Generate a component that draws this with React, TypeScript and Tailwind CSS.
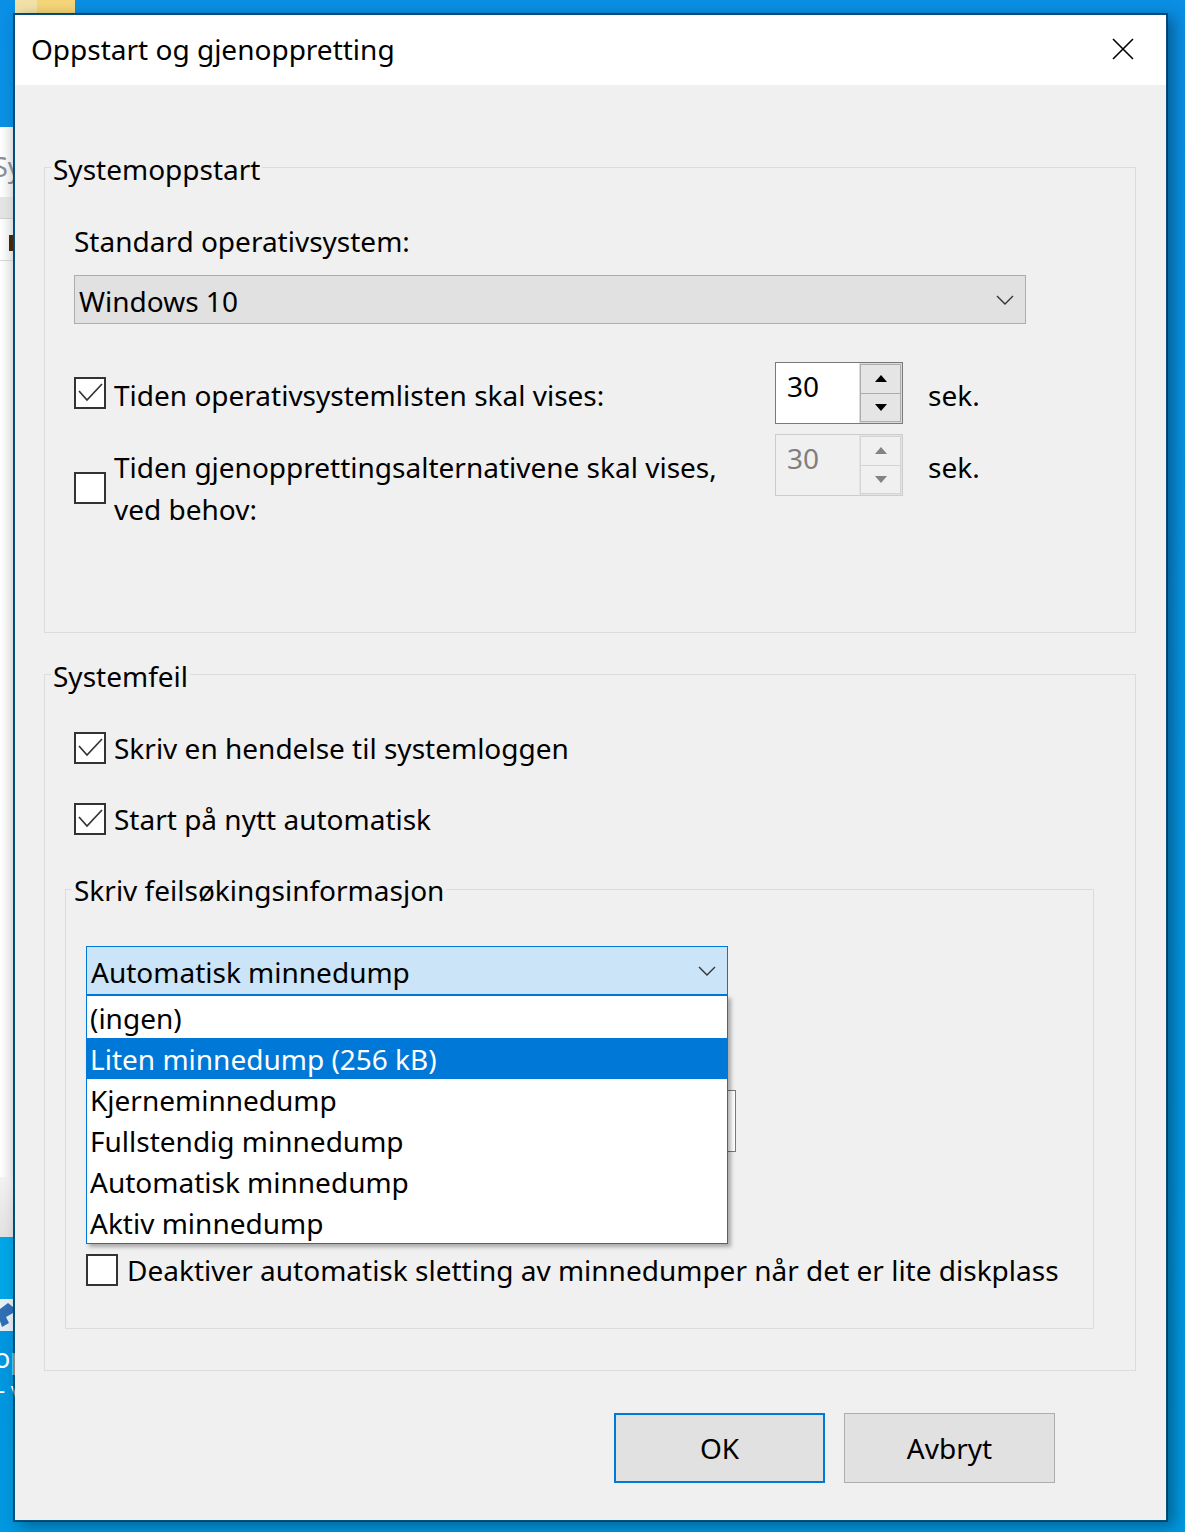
import React from "react";

function CheckBox({ checked }: { checked?: boolean }) {
  return (
    <div className="w-[32px] h-[32px] shrink-0 border-2 border-[#333333] bg-white flex items-center justify-center">
      {checked && (
        <svg width="28" height="28" viewBox="0 0 28 28">
          <polyline points="3,12 11,21 26,5" fill="none" stroke="#333333" strokeWidth="1.7" />
        </svg>
      )}
    </div>
  );
}

function Chevron() {
  return (
    <svg width="18" height="10" viewBox="0 0 18 10">
      <polyline points="1,1 9,9 17,1" fill="none" stroke="#333333" strokeWidth="1.4" />
    </svg>
  );
}

function Tri({ up, color }: { up?: boolean; color: string }) {
  return (
    <svg width="12" height="7" viewBox="0 0 12 7">
      {up ? <polygon points="0,7 12,7 6,0" fill={color} /> : <polygon points="0,0 12,0 6,7" fill={color} />}
    </svg>
  );
}

function Spinner({ disabled }: { disabled?: boolean }) {
  return (
    <div
      className={`flex w-[128px] h-[62px] shrink-0 border ${
        disabled ? "border-[#cccccc] bg-[#f0f0f0]" : "border-[#7a7a7a] bg-white"
      }`}
    >
      <div
        className={`flex-1 pl-[11px] pt-[5px] text-[28px] leading-[36px] ${
          disabled ? "text-[#7f7f7f]" : "text-black"
        }`}
      >
        30
      </div>
      <div className={`w-[43px] flex flex-col border ${disabled ? "border-[#e3e3e3]" : "border-[#dadada]"}`}>
        <div
          className={`flex-1 flex items-center justify-center border ${
            disabled ? "border-[#d4d4d4] bg-[#f0f0f0]" : "border-[#adadad] bg-[#e5e5e5]"
          }`}
        >
          <Tri up color={disabled ? "#838383" : "#000000"} />
        </div>
        <div
          className={`flex-1 flex items-center justify-center border border-t-0 ${
            disabled ? "border-[#d4d4d4] bg-[#f0f0f0]" : "border-[#adadad] bg-[#e5e5e5]"
          }`}
        >
          <Tri color={disabled ? "#838383" : "#000000"} />
        </div>
      </div>
    </div>
  );
}

const items = [
  "(ingen)",
  "Liten minnedump (256 kB)",
  "Kjerneminnedump",
  "Fullstendig minnedump",
  "Automatisk minnedump",
  "Aktiv minnedump",
];

export default function App() {
  return (
    <div className="relative w-[1185px] h-[1532px] overflow-hidden bg-gradient-to-b from-[#0a8fe4] to-[#0098e0] font-['Noto_Sans','Open_Sans',sans-serif] text-black">
      {/* desktop fragments */}
      <div className="absolute left-[15px] top-0 w-[60px] h-[13px] flex">
        <div className="w-[22px] h-full bg-[#f3e2a8]" />
        <div className="flex-1 h-full bg-[#f6d679]" />
      </div>
      <div className="absolute left-0 top-[127px] w-[13px] h-[1110px] overflow-hidden bg-gradient-to-r from-[#ffffff] to-[#ececec]">
        <div className="absolute left-[-7px] top-[22px] text-[27px] leading-[36px] text-[#8a8f99]">Sy</div>
        <div className="absolute left-0 top-[70px] w-full h-[22px] bg-[#e4e4e4] border-b border-[#d0d0d0]" />
        <div className="absolute left-[9px] top-[108px] w-[4px] h-[16px] bg-[#4a2a08]" />
        <div className="absolute left-0 top-[133px] w-full h-px bg-[#d5d5d5]" />
        <div className="absolute left-0 bottom-0 w-full h-[60px] bg-gradient-to-b from-[#f2f2f2] to-[#e2e2e2]" />
      </div>
      <div className="absolute left-0 top-[1237px] w-[13px] h-[62px] bg-[#00a6e6]" />
      <div className="absolute left-0 top-[1299px] w-[13px] h-[32px] bg-[#e8eef6] flex items-center">
        <svg width="13" height="32" viewBox="0 0 13 32">
          <path d="M0 10 L8 4 L13 8 L13 14 L6 18 L9 24 L2 28 L0 22 Z" fill="#2f6fb5" />
        </svg>
      </div>
      <div className="absolute left-[-6px] top-[1340px] text-[27px] leading-[36px] text-white">op</div>
      <div className="absolute left-[-2px] top-[1374px] text-[22px] leading-[30px] text-white">- v</div>

      {/* dialog */}
      <div className="absolute left-[13px] top-[13px] w-[1155px] h-[1509px] border-2 border-black/45 bg-clip-padding bg-[#f0f0f0] shadow-[6px_4px_14px_rgba(0,0,0,0.35)] flex flex-col">
        {/* title bar */}
        <div className="h-[70px] shrink-0 bg-white flex items-center justify-between pl-[16px] pr-[32px]">
          <div className="text-[28px] leading-[36px] -mt-[2px]">Oppstart og gjenoppretting</div>
          <svg width="22" height="22" viewBox="0 0 22 22" className="-mt-[3px]">
            <path d="M1 1 L21 21 M21 1 L1 21" stroke="#000000" strokeWidth="1.6" />
          </svg>
        </div>

        {/* body */}
        <div className="flex-1 pl-[29px] text-[28px] leading-[36px]">
          {/* Group 1 */}
          <div className="mt-[82px] w-[1092px] h-[466px] border border-[#dcdcdc] flex flex-col">
            <div className="-mt-[17px] ml-[6px] px-[2px] w-fit bg-[#f0f0f0]">Systemoppstart</div>
            <div className="pl-[29px] flex flex-col">
              <div className="mt-[36px]">Standard operativsystem:</div>
              <div className="mt-[16px] w-[952px] h-[49px] border border-[#adadad] bg-[#e1e1e1] flex items-center justify-between pl-[4px] pr-[11px]">
                <span className="mt-[2px]">Windows 10</span>
                <Chevron />
              </div>
              <div className="mt-[38px] h-[62px] flex items-center">
                <div className="w-[701px] flex items-center gap-[8px]">
                  <CheckBox checked />
                  <span className="mt-[3px]">Tiden operativsystemlisten skal vises:</span>
                </div>
                <Spinner />
                <span className="ml-[25px] mt-[3px]">sek.</span>
              </div>
              <div className="mt-[10px] flex items-start">
                <div className="w-[701px] mt-[12px] flex items-center gap-[8px]">
                  <CheckBox />
                  <span className="leading-[42px]">
                    Tiden gjenopprettingsalternativene skal vises,
                    <br />
                    ved behov:
                  </span>
                </div>
                <div className="flex items-center">
                  <Spinner disabled />
                  <span className="ml-[25px] mt-[3px]">sek.</span>
                </div>
              </div>
            </div>
          </div>

          {/* Group 2 */}
          <div className="mt-[41px] w-[1092px] h-[697px] border border-[#dcdcdc] flex flex-col">
            <div className="-mt-[17px] ml-[6px] px-[2px] w-fit bg-[#f0f0f0]">Systemfeil</div>
            <div className="pl-[29px] mt-[36px] h-[36px] flex items-center gap-[8px]">
              <CheckBox checked />
              <span>Skriv en hendelse til systemloggen</span>
            </div>
            <div className="pl-[29px] mt-[35px] h-[36px] flex items-center gap-[8px]">
              <CheckBox checked />
              <span>Start på nytt automatisk</span>
            </div>

            {/* inner group */}
            <div className="ml-[20px] mt-[52px] w-[1029px] h-[440px] border border-[#dcdcdc] flex flex-col">
              <div className="-mt-[18px] ml-[6px] px-[2px] w-fit bg-[#f0f0f0]">Skriv feilsøkingsinformasjon</div>
              <div className="pl-[20px] flex flex-col">
                <div className="relative mt-[38px] w-[642px]">
                  <div className="h-[49px] border border-[#0078d7] bg-[#cce4f7] flex items-center justify-between pl-[4px] pr-[11px]">
                    <span className="mt-[2px]">Automatisk minnedump</span>
                    <Chevron />
                  </div>
                  <div className="absolute left-0 top-full z-10 w-[642px] border border-[#0078d7] bg-white shadow-[3px_3px_4px_rgba(0,0,0,0.3)]">
                    {items.map((it, i) => (
                      <div
                        key={it}
                        className={`h-[41px] pl-[3px] flex items-center ${
                          i === 1 ? "bg-[#0078d7] text-white" : "text-black"
                        } ${i === 0 ? "mt-px" : ""}`}
                      >
                        {it}
                      </div>
                    ))}
                  </div>
                </div>
                <div className="mt-[95px] w-[650px] h-[62px] border border-[#7a7a7a] bg-white" />
                <div className="mt-[100px] h-[36px] flex items-center gap-[9px]">
                  <CheckBox />
                  <span>Deaktiver automatisk sletting av minnedumper når det er lite diskplass</span>
                </div>
              </div>
            </div>
          </div>

          {/* buttons */}
          <div className="mt-[42px] w-[1011px] flex justify-end gap-[19px]">
            <button className="w-[211px] h-[70px] border-2 border-[#0078d7] bg-[#e1e1e1] text-[28px]">OK</button>
            <button className="w-[211px] h-[70px] border border-[#adadad] bg-[#e1e1e1] text-[28px]">Avbryt</button>
          </div>
        </div>
      </div>
    </div>
  );
}
